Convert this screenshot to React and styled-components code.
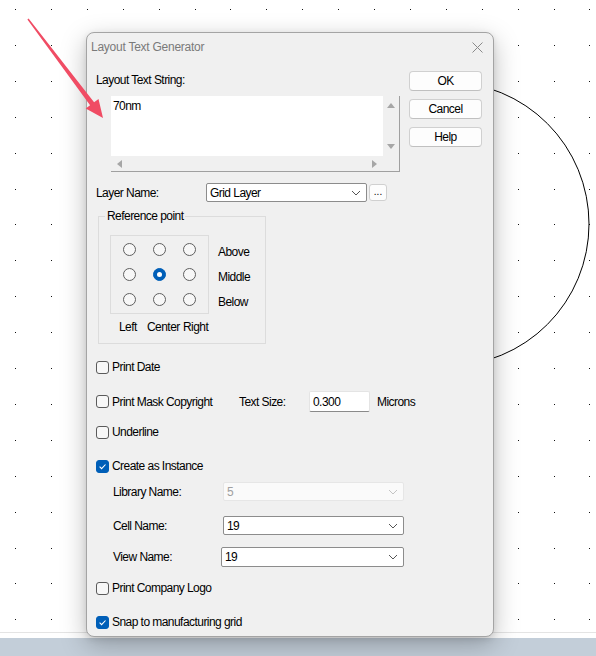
import React from "react"
import styled, { createGlobalStyle } from "styled-components"

const GlobalStyle = createGlobalStyle`
  html, body {
    margin: 0;
    padding: 0;
    background: #fff;
  }
  body {
    font-family: "Liberation Sans", Arial, sans-serif;
  }
  * {
    box-sizing: border-box;
  }
`

const GRID_X = Array.from({ length: 17 }, (_, i) => Math.round(15 + i * 35.9))
const GRID_Y = Array.from({ length: 18 }, (_, j) => Math.round(9 + j * 35.9))

const Backdrop = () => (
  <Canvas width="596" height="638" viewBox="0 0 596 638">
    {GRID_Y.map((y) =>
      GRID_X.map((x) => <rect key={`${x}-${y}`} x={x} y={y} width="1" height="1" fill="#111" />)
    )}
    <circle cx="447" cy="224" r="142" fill="none" stroke="#000" strokeWidth="1" />
    <line x1="0" y1="632.5" x2="596" y2="632.5" stroke="#e4e4e4" />
  </Canvas>
)

// red annotation arrow, drawn over the dialog
const Annotation = () => (
  <ArrowLayer width="140" height="130" viewBox="0 0 140 130">
    <polygon
      points="28.6,18.5 94.1,102.2 98.5,98.9 103,118 85.7,108.5 90.1,105.2 27.4,19.5"
      fill="#f04c64"
    />
  </ArrowLayer>
)

const Check = () => (
  <svg width="13" height="13" viewBox="0 0 13 13">
    <path d="M3.6 6.7 L5.6 8.7 L9.5 4.5" fill="none" stroke="#fff" strokeWidth="1.1" />
  </svg>
)

const Chevron = ({ disabled }) => (
  <svg width="10" height="6" viewBox="0 0 10 6">
    <path d="M1 1 L5 5 L9 1" fill="none" stroke={disabled ? "#c4c4c4" : "#555"} strokeWidth="1" />
  </svg>
)

const Arrow = ({ dir }) => {
  const pts = {
    up: "0,5 4,0 8,5",
    down: "0,0 8,0 4,5",
    left: "5,0 5,8 0,4",
    right: "0,0 5,4 0,8",
  }[dir]
  const vertical = dir === "up" || dir === "down"
  return (
    <svg width={vertical ? 8 : 5} height={vertical ? 5 : 8}>
      <polygon points={pts} fill="#a6a6a6" />
    </svg>
  )
}

const CheckBox = ({ checked, children }) => (
  <CheckRow>
    <Box checked={checked}>{checked && <Check />}</Box>
    <span>{children}</span>
  </CheckRow>
)

const Combo = ({ value, disabled, width }) => (
  <Select disabled={disabled} style={{ width }}>
    <span>{value}</span>
    <Chevron disabled={disabled} />
  </Select>
)

const RADIOS = [
  [false, false, false],
  [false, true, false],
  [false, false, false],
]

const App = () => {
  return (
    <Desktop>
      <GlobalStyle />
      <Backdrop />
      <TaskStrip />
      <Dialog>
        <TitleBar>
          <Title>Layout Text Generator</Title>
          <svg width="11" height="11" viewBox="0 0 11 11">
            <path d="M0.5 0.5 L10.5 10.5 M10.5 0.5 L0.5 10.5" stroke="#8a8a8a" strokeWidth="1" />
          </svg>
        </TitleBar>
        <Body>
          <LeftColumn>
            <Label style={{ marginTop: 2 }}>Layout Text String:</Label>
            <TextArea>
              <TextValue>70nm</TextValue>
              <VScroll>
                <Arrow dir="up" />
                <Arrow dir="down" />
              </VScroll>
              <HScroll>
                <Arrow dir="left" />
                <Arrow dir="right" />
              </HScroll>
              <Corner />
            </TextArea>

            <LayerRow>
              <FieldLabel $width={110}>Layer Name:</FieldLabel>
              <Combo value="Grid Layer" width={161} />
              <SmallButton>...</SmallButton>
            </LayerRow>

            <Group>
              <Legend>Reference point</Legend>
              <GroupInner>
                <RadioBox>
                  {RADIOS.flat().map((on, i) => (
                    <Radio key={i} on={on} />
                  ))}
                </RadioBox>
                <SideLabels>
                  <span>Above</span>
                  <span>Middle</span>
                  <span>Below</span>
                </SideLabels>
              </GroupInner>
              <BottomLabels>
                <span>Left</span>
                <span>Center</span>
                <span>Right</span>
              </BottomLabels>
            </Group>

            <Gap $h={15} />
            <CheckBox>Print Date</CheckBox>
            <Gap $h={16} />
            <MaskRow>
              <MaskCheck>
                <CheckBox>Print Mask Copyright</CheckBox>
              </MaskCheck>
              <FieldLabel $width={70}>Text Size:</FieldLabel>
              <SizeInput>0.300</SizeInput>
              <Unit>Microns</Unit>
            </MaskRow>
            <Gap $h={12} />
            <CheckBox>Underline</CheckBox>
            <Gap $h={18} />
            <CheckBox checked>Create as Instance</CheckBox>
            <Gap $h={8} />
            <SubRow>
              <FieldLabel $width={110}>Library Name:</FieldLabel>
              <Combo value="5" disabled width={181} />
            </SubRow>
            <Gap $h={15} />
            <SubRow>
              <FieldLabel $width={110}>Cell Name:</FieldLabel>
              <Combo value="19" width={181} />
            </SubRow>
            <Gap $h={12} />
            <SubRow $tall>
              <FieldLabel $width={108}>View Name:</FieldLabel>
              <Combo value="19" width={183} />
            </SubRow>
            <Gap $h={13} />
            <CheckBox>Print Company Logo</CheckBox>
            <Gap $h={18} />
            <CheckBox checked>Snap to manufacturing grid</CheckBox>
          </LeftColumn>

          <ButtonColumn>
            <Button>OK</Button>
            <Button>Cancel</Button>
            <Button>Help</Button>
          </ButtonColumn>
        </Body>
      </Dialog>
      <Annotation />
    </Desktop>
  )
}

export default App

const Desktop = styled.div`
  position: relative;
  width: 596px;
  height: 656px;
  overflow: hidden;
  display: flex;
  flex-direction: column;
  background: #fff;
`

const Canvas = styled.svg`
  display: block;
  flex: none;
`

const ArrowLayer = styled.svg`
  position: absolute;
  left: 0;
  top: 0;
  pointer-events: none;
`

const TaskStrip = styled.div`
  height: 18px;
  background: #c3ced9;
`

const Dialog = styled.div`
  position: absolute;
  left: 86px;
  top: 32px;
  width: 408px;
  height: 605px;
  background: #f0f0f0;
  border: 1px solid #a4a4a4;
  border-radius: 8px;
  box-shadow: 0 8px 26px rgba(0, 0, 0, 0.26), 0 2px 6px rgba(0, 0, 0, 0.1);
  font-size: 12px;
  letter-spacing: -0.55px;
  color: #000;
`

const TitleBar = styled.div`
  height: 27px;
  display: flex;
  align-items: center;
  justify-content: space-between;
  padding: 1px 10px 0 4px;
`

const Title = styled.div`
  font-size: 12px;
  letter-spacing: -0.25px;
  color: #7a7a7a;
`

const Body = styled.div`
  display: grid;
  grid-template-columns: 308px 73px;
  column-gap: 5px;
  align-items: start;
  padding: 11px 11px 0 9px;
`

const LeftColumn = styled.div`
  display: flex;
  flex-direction: column;
  align-items: flex-start;
`

const Label = styled.div`
  line-height: 15px;
  white-space: nowrap;
`

const TextArea = styled.div`
  margin: 8px 0 0 15px;
  width: 289px;
  height: 76px;
  display: grid;
  grid-template-columns: 272px 16px;
  grid-template-rows: 60px 15px;
  border-right: 1px solid #a0a0a0;
  border-bottom: 1px solid #a0a0a0;
  background: #f0f0f0;
`

const TextValue = styled.div`
  background: #fff;
  padding: 3px 2px;
  line-height: 15px;
`

const VScroll = styled.div`
  display: flex;
  flex-direction: column;
  align-items: center;
  justify-content: space-between;
  padding: 7px 0 7px;
`

const HScroll = styled.div`
  display: flex;
  align-items: center;
  justify-content: space-between;
  padding: 0 6px;
`

const Corner = styled.div``

const LayerRow = styled.div`
  margin-top: 11px;
  display: flex;
  align-items: center;
  height: 19px;
`

const FieldLabel = styled.div`
  flex: none;
  width: ${(p) => p.$width}px;
  white-space: nowrap;
`

const Select = styled.div`
  height: 100%;
  display: flex;
  align-items: center;
  justify-content: space-between;
  padding: 0 5px 0 3px;
  background: ${(p) => (p.disabled ? "#fafafa" : "#fff")};
  border: 1px solid ${(p) => (p.disabled ? "#e6e6e6" : "#8c8c8c")};
  border-radius: 2px;
  color: ${(p) => (p.disabled ? "#a0a0a0" : "#000")};
`

const SmallButton = styled.div`
  margin-left: 2px;
  width: 18px;
  height: 17px;
  display: flex;
  align-items: flex-end;
  justify-content: center;
  padding-bottom: 3px;
  font-size: 10px;
  line-height: 10px;
  letter-spacing: 0;
  background: #fdfdfd;
  border: 1px solid #d0d0d0;
  border-radius: 3px;
`

const Group = styled.fieldset`
  margin: 7px 0 0 2px;
  width: 168px;
  padding: 12px 0 9px 11px;
  border: 1px solid #dcdcdc;
  min-width: 0;
`

const Legend = styled.legend`
  padding: 0 2px;
  margin-left: -5px;
  line-height: 14px;
`

const GroupInner = styled.div`
  display: flex;
  align-items: flex-start;
  gap: 9px;
`

const RadioBox = styled.div`
  width: 99px;
  height: 79px;
  border: 1px solid #dcdcdc;
  display: grid;
  grid-template-columns: repeat(3, 30px);
  grid-template-rows: 25px 25px 24px;
  padding: 1px 3px 0;
  align-items: center;
  justify-items: center;
`

const Radio = styled.div`
  width: 13px;
  height: 13px;
  border-radius: 50%;
  border: 1px solid ${(p) => (p.on ? "#005fb8" : "#5f5f5f")};
  background: ${(p) => (p.on ? "#005fb8" : "#f7f7f7")};
  display: flex;
  align-items: center;
  justify-content: center;
  &::after {
    content: "";
    display: ${(p) => (p.on ? "block" : "none")};
    width: 5px;
    height: 5px;
    border-radius: 50%;
    background: #fff;
  }
`

const SideLabels = styled.div`
  display: flex;
  flex-direction: column;
  gap: 11px;
  padding-top: 10px;
  line-height: 14px;
`

const BottomLabels = styled.div`
  margin-top: 6px;
  display: grid;
  grid-template-columns: 28px 36px auto;
  padding-left: 9px;
  line-height: 14px;
`

const Gap = styled.div`
  height: ${(p) => p.$h}px;
  flex: none;
`

const CheckRow = styled.div`
  display: flex;
  align-items: center;
  gap: 3px;
  height: 16px;
  line-height: 16px;
  white-space: nowrap;
`

const Box = styled.div`
  width: 13px;
  height: 13px;
  border-radius: 3px;
  border: 1px solid ${(p) => (p.checked ? "#005fb8" : "#5a5a5a")};
  background: ${(p) => (p.checked ? "#005fb8" : "#f7f7f7")};
  display: flex;
  align-items: center;
  justify-content: center;
  svg {
    margin: -1px;
  }
`

const MaskRow = styled.div`
  display: flex;
  align-items: center;
  height: 21px;
`

const MaskCheck = styled.div`
  width: 143px;
  flex: none;
`

const SizeInput = styled.div`
  width: 61px;
  height: 21px;
  padding: 2px 3px 0;
  line-height: 17px;
  background: #fff;
  border: 1px solid #e4e4e4;
  border-bottom-color: #8a8a8a;
  border-radius: 2px;
`

const Unit = styled.div`
  margin-left: 7px;
`

const SubRow = styled.div`
  display: flex;
  align-items: center;
  padding-left: 17px;
  height: ${(p) => (p.$tall ? 20 : 19)}px;
`

const ButtonColumn = styled.div`
  display: flex;
  flex-direction: column;
  gap: 8px;
`

const Button = styled.div`
  height: 20px;
  display: flex;
  align-items: center;
  justify-content: center;
  background: #fdfdfd;
  border: 1px solid #d0d0d0;
  border-bottom-color: #c0c0c0;
  border-radius: 4px;
`
